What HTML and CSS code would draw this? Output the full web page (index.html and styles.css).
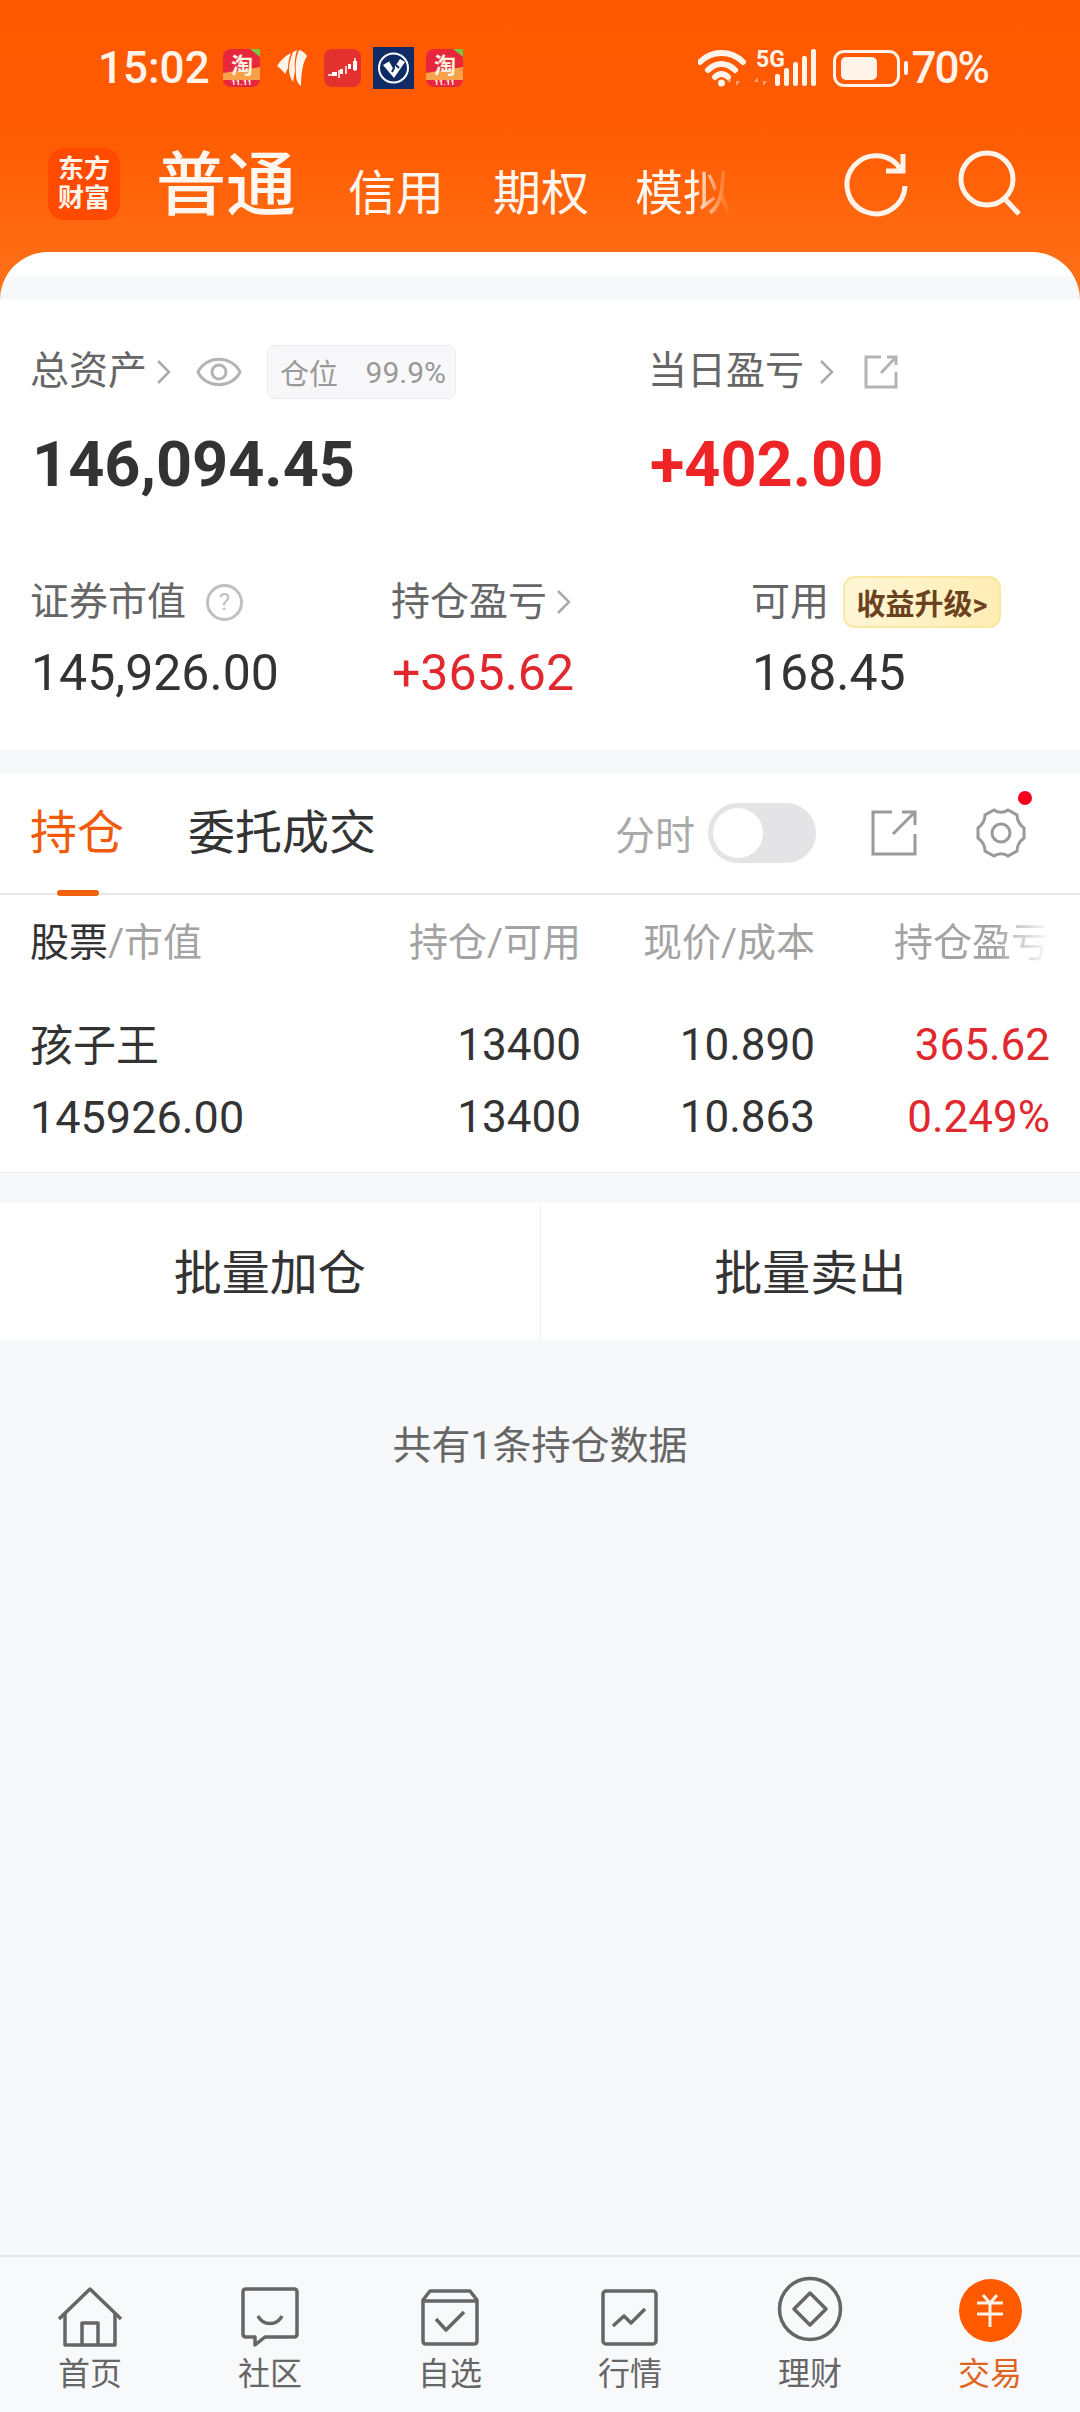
FILE: index.html
```html
<!DOCTYPE html>
<html lang="zh-CN">
<head>
    <meta charset="UTF-8">
    <meta name="viewport" content="width=device-width, initial-scale=1.0">
    <title>交易</title>
    <link rel="stylesheet" href="styles.css">
</head>
<body>
    <div class="hero">
        <div class="status-bar">
            <span class="time">15:02</span>
            <div class="app-icons">
                <svg class="app" width="37" height="38" viewBox="0 0 37 38"><rect width="37" height="38" rx="8" fill="#e8263c"/><path d="M0 24 L37 18 V31 H0Z" fill="#f7a24a"/><path d="M27 0 L37 8 V0Z" fill="#7cc444"/><text x="19" y="24" class="tao">淘</text><text x="18.5" y="35.5" class="tao-sub">11.11</text></svg>
                <svg class="app feather" width="30" height="38" viewBox="0 0 30 38"><path d="M0 17 C3 12 8 7 14 4 C12 9 11 14 11 19 L8 25 C6 22 3 19 0 17Z" fill="#fff3ea"/><path d="M16 3 L20 1 C18 8 17 15 18 22 L16 33 C13 28 12 24 12 20 C12 14 14 8 16 3Z" fill="#fff3ea"/><path d="M22 1 C26 2 29 5 30 7 C26 13 24 24 24 37 C21 35 19 31 19 26 C18 16 19 8 22 1Z" fill="#fff3ea"/></svg>
                <svg class="app" width="37" height="38" viewBox="0 0 37 38"><rect width="37" height="38" rx="8" fill="#e3312f"/><path d="M4 26h5M15 21v8M22 17v8M31 9v13" stroke="#fff" stroke-width="1.5"/><rect x="8" y="23" width="5" height="4" fill="#fff"/><rect x="16" y="20" width="3" height="5" fill="#fff"/><rect x="24" y="15" width="3" height="5" fill="#fff"/><rect x="29" y="12" width="4" height="9" fill="#fff"/></svg>
                <svg class="app" width="41" height="42" viewBox="0 0 41 42"><rect width="41" height="42" fill="#0f2c66"/><circle cx="20.5" cy="21" r="14.5" fill="none" stroke="#fff" stroke-width="2"/><path d="M10 18 L17 14 L21 21 L27 12 L32 15 L21 31Z" fill="#fff"/><path d="M17 14 L21 21 L19 25 M23 18 L26 21" stroke="#0f2c66" stroke-width="2" fill="none"/></svg>
                <svg class="app" width="37" height="38" viewBox="0 0 37 38"><rect width="37" height="38" rx="8" fill="#e8263c"/><path d="M0 24 L37 18 V31 H0Z" fill="#f7a24a"/><path d="M27 0 L37 8 V0Z" fill="#7cc444"/><text x="19" y="24" class="tao">淘</text><text x="18.5" y="35.5" class="tao-sub">11.11</text></svg>
            </div>
            <div class="sys-icons">
                <svg width="120" height="40" viewBox="0 0 120 40">
                    <path d="M2 14 C14 2 33 2 45 14" class="wifi"/>
                    <path d="M10 22 C18 14 29 14 37 22" class="wifi"/>
                    <path d="M17 29 C21 25 26 25 30 29" class="wifi"/>
                    <circle cx="23.5" cy="35" r="3.5" fill="#fff3ea"/>
                    <path d="M33 38v-9l-4 5h4zM38 29v9l4-5h-4z" class="arrows"/>
                    <path d="M60 38v-9l-4 5h4zM65 29v9l4-5h-4z" class="arrows"/>
                    <text x="58" y="19" class="five-g">5G</text>
                    <rect x="77" y="26" width="5" height="12" rx="2" fill="#fff3ea"/>
                    <rect x="86" y="20" width="5" height="18" rx="2" fill="#fff3ea"/>
                    <rect x="95" y="14" width="5" height="24" rx="2" fill="#fff3ea"/>
                    <rect x="104" y="8" width="5" height="30" rx="2" fill="#fff3ea"/>
                    <rect x="113" y="1" width="5" height="37" rx="2" fill="#fff3ea"/>
                </svg>
                <div class="battery"><div class="battery-fill"></div></div>
                <div class="battery-tip"></div>
                <span class="battery-text">70%</span>
            </div>
        </div>
        <div class="top-nav">
            <div class="logo"><span>东方</span><span>财富</span></div>
            <div class="account-tabs">
                <span class="account-tab main">普通</span>
                <span class="account-tab">信用</span>
                <span class="account-tab">期权</span>
                <span class="account-tab fade">模拟</span>
            </div>
            <svg class="top-icon refresh" width="66" height="68" viewBox="0 0 66 68"><path d="M58 20 A29 29 0 1 0 62 36" class="top-stroke"/><path d="M60 4 V21 H43" class="top-stroke"/></svg>
            <svg class="top-icon search" width="66" height="68" viewBox="0 0 66 68"><circle cx="30" cy="30" r="26" class="top-stroke"/><path d="M48 50 L62 65" class="top-stroke"/></svg>
        </div>
        <div class="sheet-cap"></div>
    </div>

    <div class="summary">
        <div class="summary-top">
            <div class="summary-col wide">
                <div class="label-row">
                    <span class="label">总资产</span>
                    <svg class="chevron" width="16" height="26" viewBox="0 0 16 26"><path d="M2 2 L13 13 L2 24"/></svg>
                    <svg class="eye" width="46" height="32" viewBox="0 0 46 32"><path d="M2 16 C10 -1 36 -1 44 16 C36 33 10 33 2 16Z" class="gray-stroke"/><circle cx="23" cy="16" r="7" class="gray-stroke"/></svg>
                    <div class="position-tag"><span>仓位</span><span class="position-num">99.9%</span></div>
                </div>
                <div class="big-value">146,094.45</div>
            </div>
            <div class="summary-col">
                <div class="label-row">
                    <span class="label">当日盈亏</span>
                    <svg class="chevron gap" width="16" height="26" viewBox="0 0 16 26"><path d="M2 2 L13 13 L2 24"/></svg>
                    <svg class="share-small" width="36" height="36" viewBox="0 0 36 36"><path d="M18 3 H3 V33 H33 V18" class="gray-stroke"/><path d="M18 19 L33 3 M24 3 H33 V11" class="gray-stroke"/></svg>
                </div>
                <div class="big-value up-strong">+402.00</div>
            </div>
        </div>
        <div class="summary-bottom">
            <div class="summary-item first">
                <div class="label-row small">
                    <span class="label">证券市值</span>
                    <span class="help">?</span>
                </div>
                <div class="mid-value">145,926.00</div>
            </div>
            <div class="summary-item second">
                <div class="label-row small">
                    <span class="label">持仓盈亏</span>
                    <svg class="chevron" width="16" height="26" viewBox="0 0 16 26"><path d="M2 2 L13 13 L2 24"/></svg>
                </div>
                <div class="mid-value up">+365.62</div>
            </div>
            <div class="summary-item">
                <div class="label-row small">
                    <span class="label">可用</span>
                    <span class="upgrade">收益升级&gt;</span>
                </div>
                <div class="mid-value">168.45</div>
            </div>
        </div>
    </div>

    <div class="holdings">
        <div class="tabs">
            <div class="tab active">持仓<div class="tab-line"></div></div>
            <div class="tab">委托成交</div>
            <div class="tab-tools">
                <span class="tool-label">分时</span>
                <div class="toggle"><div class="knob"></div></div>
                <svg class="tool-share" width="46" height="46" viewBox="0 0 46 46"><path d="M21 2 H2 V44 H44 V24" class="tool-stroke"/><path d="M22 24 L43 3 M31 2 H44 V15" class="tool-stroke"/></svg>
                <div class="gear-wrap">
                    <svg width="54" height="54" viewBox="0 0 54 54"><path d="M20 4 C24 7 30 7 34 4 L43 9 C43 14 46 19 50 22 V32 C46 35 43 40 43 45 L34 50 C30 47 24 47 20 50 L11 45 C11 40 8 35 4 32 V22 C8 19 11 14 11 9Z" class="tool-stroke"/><circle cx="27" cy="27" r="9" class="tool-stroke"/></svg>
                    <span class="red-dot"></span>
                </div>
            </div>
        </div>
        <div class="table-head">
            <div><span class="dark">股票</span>/市值</div>
            <div class="num">持仓/可用</div>
            <div class="num">现价/成本</div>
            <div class="num"><span class="fade-text">持仓盈亏</span></div>
        </div>
        <div class="table-row">
            <div class="name">孩子王</div>
            <div class="num">13400</div>
            <div class="num">10.890</div>
            <div class="num up">365.62</div>
            <div>145926.00</div>
            <div class="num">13400</div>
            <div class="num">10.863</div>
            <div class="num up">0.249%</div>
        </div>
    </div>

    <div class="batch">
        <div class="batch-btn">批量加仓</div>
        <div class="batch-btn">批量卖出</div>
    </div>

    <div class="footnote">共有1条持仓数据</div>

    <div class="bottom-nav">
        <div class="nav-item">
            <svg width="66" height="62" viewBox="0 0 66 62"><path d="M2 33 L33 3 L64 33" class="nav-stroke"/><path d="M8 28 V59 H58 V28 M25 59 V37 H41 V59" class="nav-stroke"/></svg>
            <span>首页</span>
        </div>
        <div class="nav-item">
            <svg width="58" height="62" viewBox="0 0 58 62"><path d="M5 3 H53 Q56 3 56 6 V48 Q56 51 53 51 H24 L14 59 V51 H5 Q2 51 2 48 V6 Q2 3 5 3Z" class="nav-stroke"/><path d="M17 30 C22 40 36 40 41 30" class="nav-stroke"/></svg>
            <span>社区</span>
        </div>
        <div class="nav-item">
            <svg width="58" height="62" viewBox="0 0 58 62"><path d="M2 14 L9 5 H49 L56 14 V55 Q56 58 53 58 H5 Q2 58 2 55Z M2 15 H56" class="nav-stroke"/><path d="M15 33 L25 44 L43 26" class="nav-stroke"/></svg>
            <span>自选</span>
        </div>
        <div class="nav-item">
            <svg width="58" height="62" viewBox="0 0 58 62"><rect x="2" y="5" width="53" height="53" rx="3" class="nav-stroke"/><path d="M12 40 L23 30 L30 37 L44 23" class="nav-stroke"/></svg>
            <span>行情</span>
        </div>
        <div class="nav-item">
            <svg class="round-icon" width="66" height="66" viewBox="0 0 66 66"><circle cx="33" cy="33" r="30.5" class="nav-stroke"/><path d="M33 17 L49 33 L33 49 L17 33Z" class="nav-stroke"/></svg>
            <span>理财</span>
        </div>
        <div class="nav-item active">
            <div class="trade-circle round-icon">
                <svg width="30" height="34" viewBox="0 0 30 34"><path d="M8 1 L14 8 M22 1 L16 8 M2 9 H28 M2 20 H28 M15 8 V33" fill="none" stroke="#fff3ea" stroke-width="3"/></svg>
            </div>
            <span>交易</span>
        </div>
    </div>
</body>
</html>
```

FILE: styles.css
```css
* {
    box-sizing: border-box;
}

body {
    margin: 0;
    width: 1080px;
    height: 2412px;
    position: relative;
    overflow: hidden;
    background: #f7f8fa;
    font-family: Roboto, "Noto Sans CJK SC", sans-serif;
    color: #333;
}

.up {
    color: #e0282e;
}

.up-strong {
    color: #ee2427;
}

/* header */
.hero {
    height: 300px;
    display: flex;
    flex-direction: column;
    background: linear-gradient(#ff5900 0, #ff5b02 130px, #ff7219 300px);
}

.status-bar {
    height: 130px;
    display: flex;
    align-items: center;
    padding: 6px 0 0 98px;
    color: #fff3ea;
}

.time {
    font-size: 44px;
    font-weight: 500;
    width: 125px;
}

.app-icons {
    display: flex;
    align-items: center;
    gap: 12px;
}

.app {
    display: block;
}

.feather {
    margin: 0 5px;
}

.tao {
    font-size: 22px;
    font-weight: 700;
    fill: #fff3e0;
    text-anchor: middle;
}

.tao-sub {
    font-size: 8px;
    font-weight: 700;
    fill: #fff;
    text-anchor: middle;
}

.sys-icons {
    margin-left: auto;
    padding-right: 92px;
    display: flex;
    align-items: center;
}

.wifi {
    fill: none;
    stroke: #fff3ea;
    stroke-width: 6;
    stroke-linecap: round;
}

.arrows {
    fill: #ffa47a;
}

.five-g {
    font-size: 23px;
    font-weight: 700;
    fill: #fff3ea;
}

.battery {
    width: 67px;
    height: 37px;
    margin-left: 15px;
    padding: 4px 5px;
    border: 3px solid #fff3ea;
    border-radius: 11px;
}

.battery-fill {
    width: 36px;
    height: 100%;
    background: #fff3ea;
    border-radius: 5px;
}

.battery-tip {
    width: 4px;
    height: 14px;
    margin-left: 4px;
    background: #fff3ea;
    border-radius: 2px;
}

.battery-text {
    margin-left: 4px;
    font-size: 44px;
    font-weight: 500;
    letter-spacing: -2px;
}

.top-nav {
    height: 122px;
    display: flex;
    align-items: center;
    padding: 0 0 14px 48px;
}

.logo {
    width: 72px;
    height: 72px;
    display: flex;
    flex-direction: column;
    align-items: center;
    justify-content: center;
    background: #ff4a00;
    border-radius: 16px;
    color: #fff3ea;
    font-size: 26px;
    font-weight: 700;
    line-height: 29px;
}

.account-tabs {
    width: 633px;
    margin-left: 36px;
    padding-top: 12px;
    display: flex;
    align-items: baseline;
    gap: 49px;
    color: #fff6ef;
    white-space: nowrap;
}

.account-tab {
    font-size: 48px;
    line-height: 72px;
}

.account-tab.main {
    font-size: 70px;
    font-weight: 500;
    margin-right: 3px;
}

.account-tab.fade {
    margin-left: -3px;
    -webkit-mask-image: linear-gradient(90deg, #000 60%, transparent 100%);
    mask-image: linear-gradient(90deg, #000 60%, transparent 100%);
}

.top-icon {
    flex: none;
}

.refresh {
    margin-left: 54px;
}

.search {
    margin-left: 48px;
    margin-top: -2px;
}

.top-stroke {
    fill: none;
    stroke: #fff3ea;
    stroke-width: 5;
}

.sheet-cap {
    height: 48px;
    border-radius: 48px 48px 0 0;
    background: linear-gradient(#fff 24px, #f7f8fa 24px);
}

/* summary card */
.summary {
    height: 450px;
    padding: 45px 0 0 30px;
    background: #fff;
}

.summary-top {
    display: flex;
}

.summary-col.wide {
    width: 618px;
}

.label-row {
    height: 54px;
    display: flex;
    align-items: center;
}

.label-row.small {
    height: 52px;
}

.label {
    font-size: 39px;
    line-height: 48px;
    margin-top: -3px;
    color: #666;
    white-space: nowrap;
}

.label-row.small .label {
    margin-top: -1px;
}

.chevron {
    margin-left: 9px;
}

.chevron.gap {
    margin-left: 15px;
}

.chevron path {
    fill: none;
    stroke: #aaa;
    stroke-width: 2.5;
}

.eye {
    margin-left: 24px;
}

.gray-stroke {
    fill: none;
    stroke: #b4b4b4;
    stroke-width: 3;
}

.position-tag {
    width: 189px;
    height: 54px;
    margin-left: 25px;
    display: flex;
    align-items: center;
    justify-content: space-between;
    padding: 0 9px 0 12px;
    background: #f8f8fa;
    border: 1px solid #ececf0;
    border-radius: 8px;
    font-size: 29px;
    color: #999;
}

.position-num {
    font-size: 30px;
}

.share-small {
    margin-left: 28px;
}

.big-value {
    height: 70px;
    margin-top: 31px;
    margin-left: 2px;
    font-size: 63px;
    font-weight: 700;
    line-height: 70px;
}

.summary-bottom {
    display: flex;
    margin-top: 76px;
}

.summary-item.first {
    width: 361px;
}

.summary-item.second {
    width: 360px;
}

.help {
    width: 37px;
    height: 37px;
    margin-left: 20px;
    display: flex;
    align-items: center;
    justify-content: center;
    border: 3px solid #c0c0c0;
    border-radius: 50%;
    color: #c0c0c0;
    font-size: 24px;
}

.upgrade {
    width: 158px;
    height: 52px;
    margin-left: 14px;
    display: flex;
    align-items: center;
    justify-content: center;
    background: linear-gradient(90deg, #fff6d6, #ffedb3);
    border: 2px solid #fbe8a0;
    border-radius: 12px;
    color: #6b4220;
    font-size: 29px;
    font-weight: 700;
    white-space: nowrap;
}

.mid-value {
    height: 66px;
    margin-top: 12px;
    margin-left: 1px;
    font-size: 50px;
    line-height: 66px;
}

/* holdings */
.holdings {
    margin-top: 24px;
    height: 399px;
    background: #fff;
    border-bottom: 1px solid #eee;
}

.tabs {
    height: 121px;
    display: flex;
    align-items: center;
    padding: 0 52px 2px 30px;
    border-bottom: 2px solid #e8e8e8;
}

.tab {
    position: relative;
    margin-right: 64px;
    font-size: 47px;
    line-height: 120px;
    white-space: nowrap;
}

.tab.active {
    color: #f05a0a;
}

.tab-line {
    position: absolute;
    left: 27px;
    bottom: -3px;
    width: 42px;
    height: 6px;
    background: #f5600a;
    border-radius: 3px;
}

.tab-tools {
    margin-left: auto;
    display: flex;
    align-items: center;
}

.tool-label {
    font-size: 40px;
    color: #aaa;
}

.toggle {
    width: 108px;
    height: 60px;
    margin-left: 13px;
    padding: 5px;
    background: #e4e4e6;
    border-radius: 30px;
}

.knob {
    width: 50px;
    height: 50px;
    background: #fff;
    border-radius: 50%;
}

.tool-share {
    margin-left: 55px;
}

.tool-stroke {
    fill: none;
    stroke: #9a9a9a;
    stroke-width: 3;
}

.gear-wrap {
    position: relative;
    width: 54px;
    height: 54px;
    margin-left: 57px;
}

.red-dot {
    position: absolute;
    top: -15px;
    right: -4px;
    width: 14px;
    height: 14px;
    background: #f5001e;
    border-radius: 50%;
}

.table-head,
.table-row {
    display: grid;
    grid-template-columns: 312px 239px 234px 235px;
    padding: 0 30px;
}

.table-head {
    height: 96px;
    padding-bottom: 8px;
    align-items: center;
    font-size: 39px;
    color: #a3a3a3;
}

.table-head .dark {
    color: #333;
}

.num {
    text-align: right;
    white-space: nowrap;
}

.fade-text {
    -webkit-mask-image: linear-gradient(90deg, #000 65%, transparent 100%);
    mask-image: linear-gradient(90deg, #000 65%, transparent 100%);
}

.table-row {
    padding-top: 18px;
    grid-auto-rows: 72px;
    align-items: center;
    font-size: 45px;
}

.table-row .num {
    font-size: 44px;
}

.name {
    font-size: 43px;
    padding-bottom: 6px;
}

.batch {
    margin-top: 30px;
    height: 137px;
    display: flex;
    background: #fff;
}

.batch-btn {
    flex: 1;
    display: flex;
    align-items: center;
    justify-content: center;
    padding-bottom: 6px;
    font-size: 48px;
}

.batch-btn + .batch-btn {
    border-left: 1px solid #f0f0f0;
}

.footnote {
    margin-top: 76px;
    text-align: center;
    font-size: 39px;
    line-height: 60px;
    color: #666;
}

/* bottom nav */
.bottom-nav {
    position: absolute;
    left: 0;
    right: 0;
    bottom: 0;
    height: 157px;
    display: flex;
    background: #f8f9fb;
    border-top: 2px solid #e6e6e6;
}

.nav-item {
    flex: 1;
    display: flex;
    flex-direction: column;
    align-items: center;
    justify-content: flex-end;
    padding-bottom: 18px;
    color: #666;
    font-size: 32px;
}

.nav-item span {
    margin-top: 6px;
    line-height: 40px;
}

.round-icon {
    margin-bottom: 6px;
}

.nav-item.active {
    color: #e0641f;
}

.nav-stroke {
    fill: none;
    stroke: #666;
    stroke-width: 3.5;
    stroke-linejoin: round;
}

.trade-circle {
    width: 63px;
    height: 63px;
    display: flex;
    align-items: center;
    justify-content: center;
    background: #ff5a00;
    border-radius: 50%;
}
```
